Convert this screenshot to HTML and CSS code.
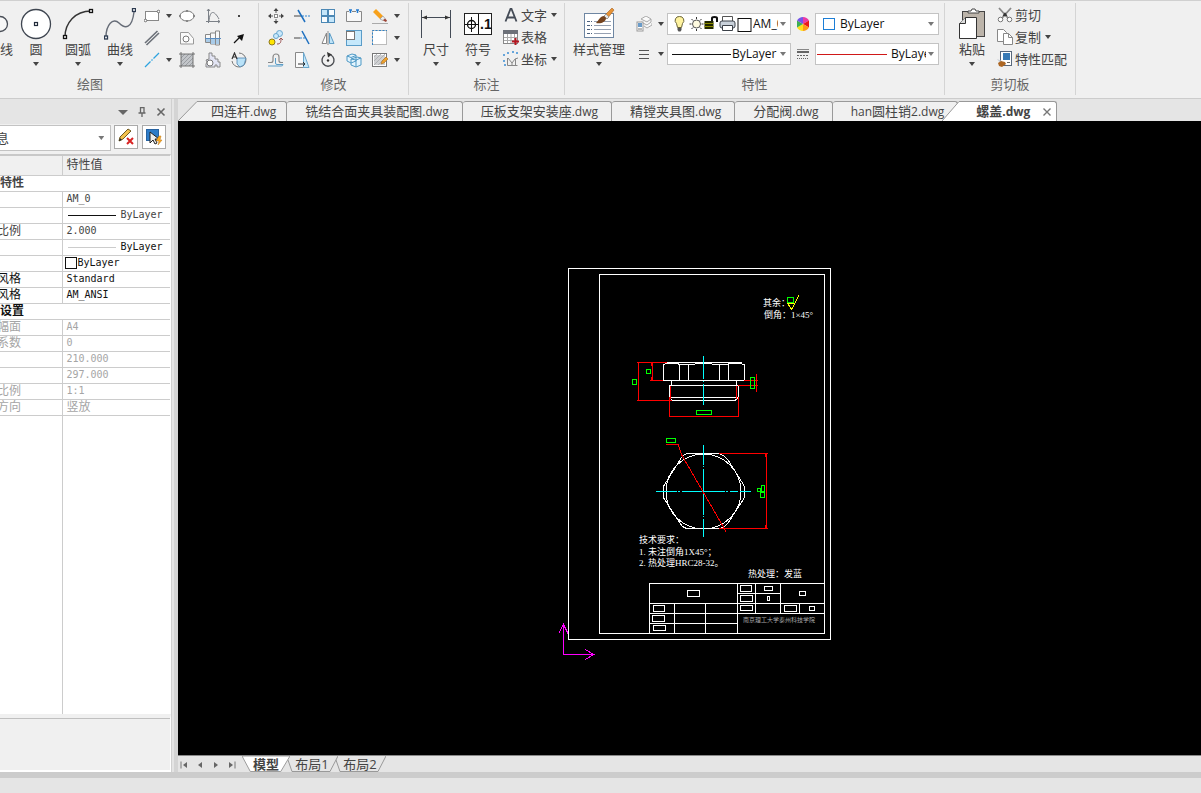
FILE: index.html
```html
<!DOCTYPE html>
<html lang="zh-CN">
<head>
<meta charset="utf-8">
<title>螺盖.dwg</title>
<link rel="stylesheet" href="styles.css">
</head>
<body>
<header class="ribbon">
  <section class="group group-draw">
    <div class="group-body">
      <button class="big big-cut"><svg width="15" height="32" viewBox="0 0 15 32"><circle cx="0" cy="16" r="7.500" fill="#f8f8f8" stroke="#4a4f58" stroke-width="1.300"/></svg><span>线</span></button>
      <button class="big"><svg width="32" height="32" viewBox="0 0 32 32"><circle cx="16" cy="16" r="14.500" fill="#fff" stroke="#3f4651" stroke-width="1.300"/><rect x="14.500" y="14.500" width="3" height="3" fill="#fff" stroke="#222b3a" stroke-width="1.200"/></svg><span>圆</span><i class="caret"></i></button>
      <button class="big"><svg width="32" height="32" viewBox="0 0 32 32"><path d="M3 29C3 15 13 3 29 3" fill="none" stroke="#333" stroke-width="1.400"/><g fill="#fff" stroke="#111" stroke-width="1.300"><rect x="1.500" y="27.500" width="3" height="3"/><rect x="27.500" y="1.500" width="3" height="3"/></g></svg><span>圆弧</span><i class="caret"></i></button>
      <button class="big"><svg width="32" height="32" viewBox="0 0 32 32"><path d="M2 29C2 17 9 9 15 15S28 21 30 4" fill="none" stroke="#666c77" stroke-width="1.400"/><g fill="#fff" stroke="#2c3a50" stroke-width="1.300"><rect x=".5" y="28" width="3" height="3"/><rect x="28.500" y=".5" width="3" height="3"/></g></svg><span>曲线</span><i class="caret"></i></button>
      <div class="tools tools-draw">
        <div class="split"><button aria-label="矩形"><svg class="ic" viewBox="0 0 16 16"><rect x="1.500" y="3.500" width="13" height="9" fill="#fff" stroke="#888"/><circle cx="1.500" cy="12.500" r="1.300" fill="#fff" stroke="#555" stroke-width=".8"/><circle cx="14.500" cy="3.500" r="1.300" fill="#fff" stroke="#555" stroke-width=".8"/></svg></button><button aria-label="矩形选项"><i class="caret"></i></button></div>
        <button aria-label="椭圆"><svg class="ic" viewBox="0 0 16 16"><ellipse cx="8" cy="8" rx="7" ry="5" fill="#fff" stroke="#777"/><path d="M7 2h2v2H7zM7 12h2v2H7zM0 7h2v2H0zM14 7h2v2h-2z" fill="#888"/></svg></button>
        <button aria-label="函数曲线"><svg class="ic" viewBox="0 0 16 16"><path d="M3.500 1v14M1 13.500h14M13 12l2 1.500-2 1.500M2 3l1.500-2L5 3M4 13C5 2 9 2 14 11" fill="none" stroke="#7b8087"/></svg></button>
        <button aria-label="点"><svg class="ic" viewBox="0 0 16 16"><rect x="7" y="7" width="2" height="2" fill="#444"/></svg></button>
        <div class="split"><button aria-label="平行线"><svg class="ic" viewBox="0 0 16 16"><path d="M1 13L13.500 1M2.500 15L15 3" stroke="#6b7078" stroke-width="1.600"/></svg></button></div>
        <button aria-label="轮廓"><svg class="ic" viewBox="0 0 16 16"><path d="M1.500 2.500h8l5 6v5.500h-13z" fill="#fafafa" stroke="#999"/><circle cx="7" cy="9" r="3" fill="#fff" stroke="#777"/></svg></button>
        <button aria-label="轴"><svg class="ic" viewBox="0 0 16 16"><path d="M.5 4.500h5v8h-5zM5.500 3h5v11h-5zM10.500 1h4v14h-4z" fill="#f8f8f8" stroke="#888"/><path d="M1 9h4v3H1zM6 9h4v5H6zM11 9h3v5h-3z" fill="#a9cbe8"/><path d="M0 8.500h16" stroke="#5a8cc0"/></svg></button>
        <button aria-label="箭头"><svg class="ic" viewBox="0 0 16 16"><path d="M3 13l6-6" stroke="#111" stroke-width="1.300"/><path d="M13 4l-7 2 5 5z" fill="#111"/></svg></button>
        <div class="split"><button aria-label="中心线"><svg class="ic" viewBox="0 0 16 16"><path d="M1 15l5.500-5.500M7.500 8.500l1-1M9.500 6.500L15 1" stroke="#2da4e0" stroke-width="1.300"/></svg></button><button aria-label="中心线选项"><i class="caret"></i></button></div>
        <button aria-label="剖面线"><svg class="ic" viewBox="0 0 16 16"><path d="M2 2h12v12H2z" fill="#c2c5c9"/><path d="M2 14L14 2M2 10l8-8M6 14l8-8M2 6l4-4M10 14l4-4" stroke="#9a9da2"/><path d="M2 0v16M14 0v16M0 2h16M0 14h16" stroke="#666" stroke-width=".9"/></svg></button>
        <button aria-label="齿轮"><svg class="ic" viewBox="0 0 16 16"><path d="M1 8l3-1V1h3v3h3v3h3v3h2v5h-3v-2h-2v2H1v-3l1-2z" fill="#e3e5f4" stroke="#888"/><circle cx="5" cy="11" r="3" fill="#fff" stroke="#777"/></svg></button>
        <button aria-label="局部放大"><svg class="ic" viewBox="0 0 16 16"><path d="M8 1a7 7 0 1 1-7 8" fill="none" stroke="#777"/><path d="M6 6h9l-2 7-4 2-3-3z" fill="#b9e2f8" stroke="#4e83ad" stroke-width=".8"/><path d="M1 7l2.500-6L6 7M2 5h3" fill="none" stroke="#333" stroke-width="1.200"/></svg></button>
      </div>
    </div>
    <h2>绘图</h2>
  </section>

  <section class="group group-edit">
    <div class="group-body">
      <div class="tools tools-edit">
        <button aria-label="平移"><svg class="ic" viewBox="0 0 16 16"><path d="M8 1v4M8 11v4M1 8h4M11 8h4" stroke="#555"/><path d="M8 0l2.500 3h-5zM8 16l2.500-3h-5zM0 8l3-2.500v5zM16 8l-3-2.500v5z" fill="#444"/><rect x="6.500" y="6.500" width="3" height="3" fill="#fff" stroke="#888"/></svg></button>
        <button aria-label="裁剪"><svg class="ic" viewBox="0 0 16 16"><path d="M0 8h8" stroke="#444"/><path d="M8 8h8" stroke="#2e84d0" stroke-dasharray="2 1"/><path d="M4 2l7 12" stroke="#1c6fc0" stroke-width="1.500"/></svg></button>
        <button aria-label="阵列"><svg class="ic" viewBox="0 0 16 16"><g fill="#c4e6fa" stroke="#4c88b5"><rect x="1.500" y="1.500" width="6" height="6"/><rect x="8.500" y="1.500" width="6" height="6" fill="#f8fcff"/><rect x="1.500" y="8.500" width="6" height="6" fill="#f8fcff"/><rect x="8.500" y="8.500" width="6" height="6"/></g></svg></button>
        <button aria-label="打断"><svg class="ic" viewBox="0 0 16 16"><path d="M3 3.500H.5v10h15v-10H13M6 3.500h4" fill="#f8f8f8" stroke="#888"/><path d="M3 2h3M4.500 2v3M10 2h3M11.500 2v3" fill="none" stroke="#247bd0" stroke-width="1.500"/></svg></button>
        <div class="split"><button aria-label="删除"><svg class="ic" viewBox="0 0 16 16"><path d="M1 4l3-3 7 7-3 3z" fill="#f7a11b"/><path d="M8 11l3-3 2 2.500-2 2z" fill="#eee" stroke="#888" stroke-width=".6"/><path d="M11 12.500l2-2 2 2-1 1.500z" fill="#9c4435"/><path d="M0 15.500h16" stroke="#aaa"/></svg></button><button aria-label="删除选项"><i class="caret"></i></button></div>
        <button aria-label="复制对象"><svg class="ic" viewBox="0 0 16 16"><circle cx="11.500" cy="3.500" r="3" fill="#cae8fb" stroke="#66a6ce"/><circle cx="8" cy="6" r="2.500" fill="#cae8fb" stroke="#66a6ce"/><circle cx="4" cy="12" r="3" fill="#ffe500" stroke="#8f7a22"/><path d="M9 14c3 0 4-1 4-5M11 10l2-2 2 2" fill="none" stroke="#9a5555"/></svg></button>
        <button aria-label="延伸"><svg class="ic" viewBox="0 0 16 16"><path d="M0 8h6" stroke="#444"/><path d="M6 8h5" stroke="#2e84d0" stroke-dasharray="2 1"/><path d="M8 1l7 13" stroke="#1c6fc0" stroke-width="1.500"/></svg></button>
        <button aria-label="镜像"><svg class="ic" viewBox="0 0 16 16"><path d="M6.500 3v10.500H2z" fill="#fff" stroke="#888"/><path d="M9.500 3v10.500H14z" fill="#bfe4f8" stroke="#5d9cc6"/><path d="M8 1v14" stroke="#777" stroke-width=".8"/></svg></button>
        <button aria-label="缩放"><svg class="ic" viewBox="0 0 16 16"><rect x=".5" y=".5" width="15" height="15" fill="#c5e8fb" stroke="#5a9cc8"/><rect x=".5" y="1.500" width="8" height="8" fill="#fff" stroke="#777"/></svg></button>
        <div class="split"><button aria-label="拉伸"><svg class="ic" viewBox="0 0 16 16"><rect x=".5" y=".5" width="14" height="14" fill="#fff" stroke="#bbb"/><path d="M.5 15V.5H15" fill="none" stroke="#3184c8" stroke-dasharray="2 1.500"/></svg></button><button aria-label="拉伸选项"><i class="caret"></i></button></div>
        <button aria-label="偏移"><svg class="ic" viewBox="0 0 16 16"><path d="M0 10.500h3q2 0 2-2V5a3 3 0 0 1 6 0v3.500q0 2 2 2h2" fill="none" stroke="#888" stroke-width="1.200"/><path d="M0 14h13q2 0 2-1.500H9q-1.500 0-1.500-1.500V6" fill="none" stroke="#5c9ec8"/></svg></button>
        <button aria-label="倒角"><svg class="ic" viewBox="0 0 16 16"><path d="M1.500.5h8v15h-8z" fill="#fafafa" stroke="#888"/><path d="M9.500.5l5.500 15H9.500z" fill="#c6e8fa" stroke="#69a6cc"/><path d="M4 12h7M9 10l2 2-2 2" fill="none" stroke="#333"/></svg></button>
        <button aria-label="旋转"><svg class="ic" viewBox="0 0 16 16"><path d="M5 3a6 6 0 1 0 6 0" fill="none" stroke="#4b4d52" stroke-width="1.400"/><path d="M7 0l5 2.500-4 3z" fill="#333"/><circle cx="8" cy="8.500" r="1.200" fill="#333"/></svg></button>
        <button aria-label="分解"><svg class="ic" viewBox="0 0 16 16"><path d="M1 4l5-2 4 1v6l-5 2-4-2zM5 7l6-2 4 1v7l-5 2-5-2z" fill="#e4f5fe" stroke="#4f99c5"/><path d="M5 7l5 1 5-2M10 8v7M1 4l4 1.500 5-2" fill="none" stroke="#4f99c5"/></svg></button>
        <div class="split"><button aria-label="编辑剖面"><svg class="ic" viewBox="0 0 16 16"><rect x=".5" y="1.500" width="14" height="13" fill="#fff" stroke="#777"/><path d="M2 3h11v10H2z" fill="#cfd0d2"/><path d="M2 13L13 2M2 9l7-7M2 5l3-3M6 13l8-8" stroke="#b0b2b5"/><path d="M9 12l1-3 4-4 2 2-4 4z" fill="#eda22e" stroke="#a66b22" stroke-width=".6"/></svg></button><button aria-label="编辑剖面选项"><i class="caret"></i></button></div>
      </div>
    </div>
    <h2>修改</h2>
  </section>

  <section class="group group-note">
    <div class="group-body">
      <button class="big"><svg width="32" height="32" viewBox="0 0 32 32"><path d="M1.500 2v28M30.500 2v28M2 9.500h28" stroke="#444b56"/><path d="M2 9.500l5-2v4zM30 9.500l-5-2v4z" fill="#333"/></svg><span>尺寸</span><i class="caret"></i></button>
      <button class="big"><svg width="32" height="32" viewBox="0 0 32 32"><rect x="2.500" y="5.500" width="27" height="21" fill="#fff" stroke="#222"/><path d="M16.500 6v20M3 16.500h13M9.500 9v15" stroke="#111"/><circle cx="9.500" cy="16.500" r="4" fill="none" stroke="#111" stroke-width="1.300"/><text x="18" y="21" class="sym">.1</text></svg><span>符号</span><i class="caret"></i></button>
      <div class="list">
        <button><svg class="ic" viewBox="0 0 16 16"><path d="M2.500 14.500L7.500 2h1l5 12.500M4.500 10.500h7" fill="none" stroke="#444b56" stroke-width="1.800"/></svg><span>文字</span><i class="caret"></i></button>
        <button><svg class="ic" viewBox="0 0 16 16"><rect x=".5" y="1.500" width="14" height="13" fill="#fff" stroke="#888"/><path d="M0 1h15v4H0z" fill="#6c7078"/><path d="M1 8.500h13M1 11.500h13M4.500 5v9M8 5v9M11.500 5v9" stroke="#aaa"/><path d="M12.500 9v7M9 12.500h7" stroke="#b51620" stroke-width="2"/></svg><span>表格</span></button>
        <button><svg class="ic" viewBox="0 0 16 16"><path d="M4.500 7v7.500h10M5 7l4 5 3-4 3-1M9 12v2M12.500 8v6" fill="none" stroke="#888"/><path d="M1 3v2M5 1v2M9 1h2M14 1v2M1 9v2M2 13v2" stroke="#3b8dd3" stroke-width="1.500"/></svg><span>坐标</span><i class="caret"></i></button>
      </div>
    </div>
    <h2>标注</h2>
  </section>

  <section class="group group-props">
    <div class="group-body">
      <button class="big big-wide"><svg width="32" height="32" viewBox="0 0 32 32"><rect x="1.500" y="5.500" width="29" height="24" fill="#fff" stroke="#6e86a2"/><path d="M4 13.500h5M4 17.500h5M4 21.500h5M4 25.500h5" stroke="#4b607c" stroke-dasharray="3 1"/><path d="M11 13.500h17M11 17.500h17M11 21.500h17M11 25.500h17" stroke="#97a1b2"/><path d="M29 0l2 2-7 9-3-3z" fill="#e69235" stroke="#a56224" stroke-width=".6"/><path d="M23 6l3 3-2 2-3-3z" fill="#e4e4e4" stroke="#777" stroke-width=".5"/><path d="M21 8c-4 0-5 4-8 7 5 1 10-1 10-5z" fill="#75431e"/></svg><span>样式管理</span><i class="caret"></i></button>
      <div class="props">
        <div class="split prop-icon"><button aria-label="图层"><svg class="ic" viewBox="0 0 16 16"><path d="M5 3l5-3 5 3-4 3zM5 6l6 3 4-3v-3M8 10l3 2 5-3V7" fill="#fafafa" stroke="#aaa"/><rect x="1" y="6" width="6" height="9" fill="#fff" stroke="#999"/><rect x="2" y="7" width="4" height="4" fill="#6a9bc8"/><path d="M2 13h4" stroke="#777"/></svg></button><button aria-label="图层选项"><i class="caret"></i></button></div>
        <div class="combo">
          <svg class="states" width="78" height="18" viewBox="0 0 78 18"><path d="M9 1.500a4 4 0 0 1 3 7l-1 4H7l-1-4a4 4 0 0 1 3-7z" fill="#fff3a0" stroke="#6b6538"/><path d="M7 13h4v2l-1 1.500H8L7 15z" fill="#555"/><circle cx="26" cy="9" r="4" fill="#fffbe0" stroke="#555"/><path d="M26 2v2M26 14v2M19 9h2M31 9h2M21 4l1.500 1.500M29.500 12.500L31 14M21 14l1.500-1.500M29.500 5.500L31 4" stroke="#333"/><path d="M34 6h9v8h-9z" fill="#222800"/><path d="M34 8.500h9M34 11.500h9" stroke="#8c8c00"/><path d="M41.500 6V3q0-1 2.500-1t2.500 1v4" fill="none" stroke="#111" stroke-width="2"/><path d="M52 6V1.500h10V6" fill="#fff" stroke="#555"/><rect x="49.500" y="6" width="15" height="7" rx="2" fill="#c9d1da" stroke="#3b4048"/><path d="M52 10.500h10v5H52z" fill="#fff" stroke="#3b4048"/><rect x="67.500" y="3.500" width="13" height="13" fill="#fff" stroke="#111"/></svg>
          <select aria-label="图层"><option>AM_0</option></select><i class="caret"></i></div>
        <svg class="mid" width="14" height="14" viewBox="0 0 14 14"><path d="M7 7V0a7 7 0 0 1 6 3.500z" fill="#ea3ba4"/><path d="M7 7l6-3.500v7z" fill="#e91919"/><path d="M7 7l6 3.500A7 7 0 0 1 7 14z" fill="#ff9a16"/><path d="M7 7v7a7 7 0 0 1-6-3.500z" fill="#ffdf17"/><path d="M7 7l-6 3.500v-7z" fill="#3dae54"/><path d="M7 7L1 3.500A7 7 0 0 1 7 0z" fill="#7455e8"/></svg>
        <div class="combo"><span class="swatch"></span><select aria-label="颜色"><option>ByLayer</option></select><i class="caret"></i></div>
        <div class="split prop-icon"><button aria-label="线型"><svg class="ic" viewBox="0 0 16 16"><path d="M3 4.500h10M3 8.500h10M3 12.500h10" stroke="#555"/></svg></button><button aria-label="线型选项"><i class="caret"></i></button></div>
        <div class="combo"><span class="line"></span><select aria-label="线型"><option>ByLayer</option></select><i class="caret"></i></div>
        <svg class="mid" width="14" height="14" viewBox="0 0 14 14"><path d="M1 2.500h12" stroke="#888"/><path d="M1 5h12" stroke="#666" stroke-width="2"/><path d="M1 8.500h12" stroke="#666" stroke-dasharray="2 1"/><path d="M1 11.500h12" stroke="#666" stroke-dasharray="1 1"/></svg>
        <div class="combo"><span class="line line-red"></span><select aria-label="线宽"><option>ByLayer</option></select><i class="caret"></i></div>
      </div>
    </div>
    <h2>特性</h2>
  </section>

  <section class="group group-clip">
    <div class="group-body">
      <button class="big"><svg width="32" height="32" viewBox="0 0 32 32"><rect x="6.500" y="3.500" width="22" height="25" fill="#bcb4aa" stroke="#444"/><path d="M12 5V3h3l1-2h3l1 2h3v2z" fill="#fff" stroke="#444"/><path d="M3.500 15.500l6-6h11v21h-17z" fill="#fff" stroke="#333"/><path d="M3.500 15.500h6v-6" fill="#ddd" stroke="#333"/></svg><span>粘贴</span><i class="caret"></i></button>
      <div class="list">
        <button><svg class="ic" viewBox="0 0 16 16"><path d="M2 1l9 10M14 1L5 11" stroke="#888" stroke-width="1.800"/><path d="M6.500 9L8 7l1.500 2" fill="none" stroke="#333" stroke-width="2"/><circle cx="3.500" cy="12.500" r="2.300" fill="#fff" stroke="#777"/><circle cx="12.500" cy="12.500" r="2.300" fill="#fff" stroke="#777"/></svg><span>剪切</span></button>
        <button><svg class="ic" viewBox="0 0 16 16"><path d="M.5.500h6l3 3v9h-9z" fill="#fff" stroke="#888"/><path d="M6.500 4.500h5l4 4v7h-9z" fill="#fff" stroke="#888"/><path d="M11.500 4.500v4h4" fill="none" stroke="#888"/></svg><span>复制</span><i class="caret"></i></button>
        <button><svg class="ic" viewBox="0 0 16 16"><rect x="3.500" y=".5" width="11" height="14" fill="#fff" stroke="#58687c"/><rect x="6" y="2" width="7" height="7" fill="#397ab5"/><path d="M10 11.500h3" stroke="#666"/><path d="M0 8l5 2-1 3z" fill="#c5cbd2"/><path d="M1 12l3-2 4 1 1 2-4 3-3-1z" fill="#ad6724"/></svg><span>特性匹配</span></button>
      </div>
    </div>
    <h2>剪切板</h2>
  </section>
</header>

<main class="work">
  <aside class="panel">
    <div class="panel-head">
      <button aria-label="菜单"><svg width="10" height="10" viewBox="0 0 10 10"><path d="M0 3h10L5 8z" fill="#666"/></svg></button>
      <button aria-label="固定"><svg width="10" height="10" viewBox="0 0 10 10"><path d="M3 .5h4M3.500 0v6M7 0v6M1.500 6h7M5 6v4" fill="none" stroke="#666" stroke-width="1.300"/></svg></button>
      <button aria-label="关闭面板"><svg width="10" height="10" viewBox="0 0 10 10"><path d="M1.500 1.500l7 7M8.500 1.500l-7 7" stroke="#666" stroke-width="1.600"/></svg></button>
    </div>
    <div class="panel-tools">
      <div class="combo combo-info"><select aria-label="信息"><option>息</option></select><i class="caret"></i></div>
      <button class="tool" aria-label="清除"><svg width="18" height="18" viewBox="0 0 18 18"><path d="M2 13l1-4 8-8 3 2-8 8z" fill="#f3c14c" stroke="#705a21"/><path d="M2 13l1-3 2 2z" fill="#222"/><path d="M10 10l6 6M16 10l-6 6" stroke="#d82323" stroke-width="2"/></svg></button>
      <button class="tool" aria-label="选择"><svg width="18" height="18" viewBox="0 0 18 18"><rect x="1.500" y="1.500" width="12" height="11" fill="#2d7cc9" stroke="#2662a0"/><path d="M5 4v11l3-3 2 4 2-1-2-4h4z" fill="#eee" stroke="#222"/><path d="M14 8l-3 5h3l-1 4 4-5h-2l1-4z" fill="#ffab20" stroke="#b8761a" stroke-width=".5"/></svg></button>
    </div>
    <div class="grid-wrap">
    <table class="grid">
      <thead><tr><th></th><th>特性值</th></tr></thead>
      <tbody>
        <tr class="soft sect"><th colspan="2">特性</th></tr>
        <tr class="soft"><td></td><td>AM_0</td></tr>
        <tr class="soft"><td></td><td><span class="sample"></span>ByLayer</td></tr>
        <tr class="soft"><td class="cut">比例</td><td>2.000</td></tr>
        <tr><td></td><td><span class="sample sample-thin"></span>ByLayer</td></tr>
        <tr><td></td><td><span class="box"></span>ByLayer</td></tr>
        <tr><td class="cut">风格</td><td>Standard</td></tr>
        <tr><td class="cut">风格</td><td>AM_ANSI</td></tr>
        <tr class="sect"><th colspan="2">设置</th></tr>
        <tr class="off"><td class="cut">幅面</td><td>A4</td></tr>
        <tr class="off"><td class="cut">系数</td><td>0</td></tr>
        <tr class="off"><td></td><td>210.000</td></tr>
        <tr class="off"><td></td><td>297.000</td></tr>
        <tr class="off"><td class="cut">比例</td><td>1:1</td></tr>
        <tr class="off"><td class="cut">方向</td><td class="han">竖放</td></tr>
        <tr class="fill"><td></td><td></td></tr>
      </tbody>
    </table>
    </div>
    <div class="hint"></div>
  </aside>
  <div class="splitter"></div>

  <div class="docs">
    <nav class="tabs">
      <svg class="slope" width="20" height="20" viewBox="0 0 20 20"><path d="M0 20L19 .5H20V20z" fill="#f0f0f0"/><path d="M0 20L19 .5H20" fill="none" stroke="#999"/></svg>
      <button class="tab tab-first">四连杆<span>.dwg</span></button>
      <button class="tab">铣结合面夹具装配图<span>.dwg</span></button>
      <button class="tab">压板支架安装座<span>.dwg</span></button>
      <button class="tab">精镗夹具图<span>.dwg</span></button>
      <button class="tab">分配阀<span>.dwg</span></button>
      <button class="tab"><span>han</span>圆柱销<span>2.dwg</span></button>
      <svg class="slope slope-active" width="18" height="20" viewBox="0 0 18 20"><path d="M0 20L17 .5H18V20z" fill="#fff"/><path d="M0 20L17 .5H18" fill="none" stroke="#999"/></svg>
      <div class="tab tab-active"><button>螺盖<span>.dwg</span></button><button aria-label="关闭"><svg width="8" height="8" viewBox="0 0 8 8"><path d="M.5.500l7 7M7.500.500l-7 7" stroke="#777" stroke-width="1.400"/></svg></button></div>
    </nav>
    <div class="canvas">
      <svg class="drawing" viewBox="178 121 1023 634" preserveAspectRatio="xMidYMid meet" role="img" aria-label="螺盖零件图">
        <g class="w">
          <path d="M568.500 268.500h262v371h-262zM599.500 274.500h225v359h-225z"/>
          <path d="M667 362.500h75M663.500 380.500V365q2-2 8-2t8 1.500h12q12-2 25 0h11q2-1.500 8-1.500t9 2v15.500zM679.500 364v16M688.500 364v16M719.500 364v16M728.500 364v16"/>
          <path d="M671.500 380v5M736.500 380v5M669.500 397.500v-12h69v12zM669.500 397.500l2.500 3h63l3-3"/>
          <circle cx="703.500" cy="491.500" r="37.500"/>
          <path d="M687 453.500h32q6 2 10 8l15 24q1 6 0 13l-15 23q-4 6-10 7h-32q-5-1-8-7l-15-23q-1-7 0-13l15-24q3-6 8-8z"/>
          <path d="M649.500 633.500v-50h175M649.500 603.500h175M649.500 613.500h175M649.500 623.500h88M674.500 603.500v30M705.500 603.500v30M737.500 583.500v50M755.500 583.500v30M780.500 583.500v30M799.500 603.500v10M737.500 593.500h43"/>
          <path d="M687.500 590.500h12v6h-12zM740.500 585.500h11v6h-11zM764.500 586.500h8v4h-8zM740.500 595.500h12v6h-12zM767.500 596.500h2v4h-2zM799.500 591.500h6v4h-6zM653.500 605.500h11v6h-11zM740.500 605.500h12v5h-12zM784.500 605.500h12v6h-12zM809.500 606.500h5v4h-5zM652.500 615.500h12v6h-12zM653.500 625.500h12v5h-12z"/>
        </g>
        <g class="c">
          <path d="M703.500 356v23M703.500 381v1M703.500 384v21M703.500 445v20M703.500 466v1M703.500 469v46M703.500 516v1M703.500 519v18M656 491.500h21M678 491.500h2M682 491.500h43M726 491.500h2M730 491.500h8M740 491.500h11"/>
        </g>
        <g class="r">
          <path d="M667 362.500h-30M638.500 362v38M637 400.500h35M652.500 362v18M651.500 363v3M651.500 377v3M650 380.500h13M670.500 386v13M736.500 386v13M669.500 397v20M738.500 397v20M669 416.500h69M756.500 374v18M744 380.500h14M738 385.500h20"/>
          <path d="M666 444.500h12l4 11 44 76M719 453.500h49M719 528.500h49M766.500 453v75M765.500 454v3M765.500 525v3"/>
        </g>
        <g class="g">
          <path d="M632.500 379.500h4v5h-4zM646.500 369.500h4v4h-4zM750.500 377.500h4v11h-4zM696.500 410.500h15v4h-15zM666.500 438.500h9v4h-9zM757.500 488.500h3v3h-3zM761.500 485.500h3v6h-3zM760.500 492.500h4v5h-4zM787.500 297.500h6v5h-6z"/>
        </g>
        <path class="y" d="M787 303.500h7M788 304l3.500 5.500 7.500-14"/>
        <path class="m" d="M563.500 624v30.500H594M559 632.500l4.500-8 4.500 9M585 649.500l9 5-9 5"/>
        <g class="notes">
          <text x="763" y="306">其余：</text>
          <text x="764" y="318">倒角：1×45°</text>
          <text x="639" y="543">技术要求：</text>
          <text x="639" y="555">1. 未注倒角1X45°；</text>
          <text x="639" y="566">2. 热处理HRC28-32。</text>
          <text x="748" y="577">热处理：发蓝</text>
          <text x="743" y="622" class="school">南京理工大学泰州科技学院</text>
        </g>
      </svg>
    </div>
    <nav class="sheets">
      <div class="nav">
        <button aria-label="首页"><svg width="8" height="8" viewBox="0 0 8 8"><path d="M1 .5v7" stroke="#777"/><path d="M7 1v6L3 4z" fill="#666"/></svg></button>
        <button aria-label="上一页"><svg width="8" height="8" viewBox="0 0 8 8"><path d="M6 1v6L2 4z" fill="#666"/></svg></button>
        <button aria-label="下一页"><svg width="8" height="8" viewBox="0 0 8 8"><path d="M2 1v6l4-3z" fill="#666"/></svg></button>
        <button aria-label="末页"><svg width="8" height="8" viewBox="0 0 8 8"><path d="M7 .5v7" stroke="#777"/><path d="M1 1v6l4-3z" fill="#666"/></svg></button>
      </div>
      <button class="sheet sheet-on"><svg viewBox="0 0 52 16" preserveAspectRatio="none"><path d="M0 0l9 15.500h33L52 0z" fill="#fff" stroke="#999"/></svg><span>模型</span></button>
      <button class="sheet"><svg viewBox="0 0 52 16" preserveAspectRatio="none"><path d="M2 4l4 11.500h38L52 0" fill="none" stroke="#999"/></svg><span>布局1</span></button>
      <button class="sheet"><svg viewBox="0 0 52 16" preserveAspectRatio="none"><path d="M2 4l4 11.500h38L52 0" fill="none" stroke="#999"/></svg><span>布局2</span></button>
    </nav>
  </div>
</main>
<footer class="status"></footer>
</body>
</html>
```

FILE: styles.css
```css
* { box-sizing: border-box; }
html, body { height: 100%; }
body {
  margin: 0;
  display: flex;
  flex-direction: column;
  overflow: hidden;
  background: #e5e5e5;
  color: #444;
  font: 12px/16px "Open Sans", "Noto Sans CJK SC", sans-serif;
}
button {
  margin: 0;
  padding: 0;
  border: 0;
  background: none;
  color: inherit;
  font: inherit;
  white-space: nowrap;
}
svg { display: block; flex: none; }
.caret {
  display: block;
  flex: none;
  width: 6px;
  height: 4px;
  background: #444;
  clip-path: polygon(0 0, 100% 0, 50% 100%);
}
.ic { width: 16px; height: 16px; }

/* ribbon */
.ribbon {
  flex: none;
  display: flex;
  background: #f0f0f0;
  border-top: 1px solid #d0d0d0;
  border-bottom: 1px solid #ccc;
  font-size: 13px;
}
.group {
  flex: none;
  display: flex;
  flex-direction: column;
  margin: 2px 0 3px;
  border-right: 1px solid #d4d4d4;
}
.group-body { display: flex; height: 73px; }
.group h2 {
  margin: 0;
  height: 19px;
  font-size: 13px;
  font-weight: 400;
  line-height: 16px;
  text-align: center;
  color: #666;
}
.group-draw { width: 259px; }
.group-draw h2 { padding-right: 78px; }
.group-edit { width: 150px; }
.group-edit .group-body { padding-left: 9px; }
.group-note { width: 156px; }
.group-note .group-body, .group-clip .group-body { padding-left: 6px; }
.group-props { width: 380px; }
.group-props .group-body { padding-left: 6px; }
.group-clip { width: 131px; }
.big {
  flex: none;
  width: 42px;
  padding-top: 5px;
  display: flex;
  flex-direction: column;
  align-items: center;
}
.big span { margin: 1px 0 5px; line-height: 16px; }
.big-cut { width: 15px; align-items: flex-start; }
.big-wide { width: 56px; }
.sym { font: bold 14px "Liberation Sans", sans-serif; fill: #111; }
.tools { display: grid; grid-auto-rows: 22px; align-items: center; padding-top: 2px; }
.tools-draw { grid-template-columns: 35px 26px 26px 16px; margin-left: 3px; }
.tools-edit { grid-template-columns: 26px 26px 26px 26px 32px; }
.split { display: flex; align-items: center; gap: 6px; }
.list { margin-left: 4px; padding-top: 1px; }
.list button { display: flex; align-items: center; height: 22px; gap: 2px; }
.list .caret { margin-left: 2px; }

.props {
  display: grid;
  grid-template-columns: 31px 124px 24px 124px;
  grid-auto-rows: 22px;
  row-gap: 8px;
  align-items: center;
  margin: 10px 0 0 9px;
}
.mid { justify-self: center; }
.combo {
  display: flex;
  align-items: center;
  height: 22px;
  padding: 0 4px 0 1px;
  background: #fff;
  border: 1px solid #c3c3c3;
  overflow: hidden;
}
.combo select {
  flex: 1;
  min-width: 0;
  padding: 0;
  border: 0;
  appearance: none;
  background: none;
  color: #111;
  font: 12px/18px "Open Sans", "Noto Sans CJK SC", sans-serif;
}
.combo .caret { margin-left: 2px; background: #777; }
.states { width: 81px; margin-right: 3px; overflow: visible; }
.swatch { width: 12px; height: 12px; margin: 0 5px 0 6px; border: 1px solid #1c7ed6; }
.line { flex: none; width: 59px; height: 1px; margin: 0 1px 0 3px; background: #111; }
.line-red { width: 70px; margin: 0 4px 0 0; background: #d01818; }

/* work area */
.work { flex: 1; min-height: 0; display: flex; }
.panel {
  flex: none;
  width: 172px;
  display: flex;
  flex-direction: column;
  background: #f0f0f0;
  border-right: 1px solid #d0d0d0;
}
.panel-head {
  display: flex;
  justify-content: flex-end;
  align-items: center;
  gap: 9px;
  height: 25px;
  padding-right: 5px;
  background: #e5e5e5;
}
.panel-tools { display: flex; gap: 3px; padding: 1px 5px 3px 0; }
.combo-info { width: 112px; height: 26px; padding: 0 6px 0 0; border-left: 0; }
.combo-info select { font-size: 13px; color: #444; text-indent: -4px; }
.tool {
  width: 24px;
  height: 24px;
  display: grid;
  place-items: center;
  background: #fff;
  border: 1px solid #aaa;
}
.tool + .tool { margin-left: 1px; }
.grid-wrap {
  flex: 1;
  min-height: 0;
  display: flex;
  border-top: 2px solid #c8c8c8;
  border-right: 1px solid #fff;
  background: #fff;
}
.grid {
  width: 100%;
  height: 100%;
  border-collapse: collapse;
  table-layout: fixed;
  font: 10px/14px "DejaVu Sans Mono", "Noto Sans CJK SC", monospace;
  color: #111;
}
.grid th, .grid td {
  height: 16px;
  padding: 0 0 0 4px;
  border-bottom: 1px solid #ccc;
  text-align: left;
  white-space: nowrap;
  overflow: hidden;
}
.grid td:first-child, .grid thead th:first-child {
  width: 62px;
  padding: 0;
  border-right: 1px solid #ccc;
}
.grid thead th {
  height: 19px;
  background: #f0f0f0;
  font-size: 12px;
  font-weight: 400;
  color: #444;
}
.grid .soft { color: #444; }
.grid .sect th { padding: 0; font-size: 12px; font-weight: 700; }
.grid .cut { font-size: 12px; text-indent: -3px; }
.grid .han { font-size: 12px; }
.grid .off { color: #a5a5a5; }
.grid .fill td { height: auto; border-bottom: 0; }
.sample {
  display: inline-block;
  width: 48px;
  height: 1px;
  margin: 0 5px 0 1px;
  vertical-align: middle;
  background: #111;
}
.sample-thin { background: #ccc; }
.box {
  display: inline-block;
  width: 12px;
  height: 12px;
  margin: 0 1px 0 -2px;
  vertical-align: middle;
  border: 1px solid #111;
}
.hint {
  flex: none;
  height: 58px;
  border-top: 4px solid #f0f0f0;
  border-right: 1px solid #fff;
  border-bottom: 2px solid #fff;
  box-shadow: inset 0 1px #c0c0c0;
}
.splitter {
  flex: none;
  width: 6px;
  background: #d4d4d4;
  border-left: 2px solid #e5e5e5;
}
.docs { flex: 1; min-width: 0; display: flex; flex-direction: column; }
.tabs { flex: none; display: flex; height: 22px; padding-top: 2px; background: #e5e5e5; }
.tab {
  flex: none;
  height: 20px;
  padding: 0 13px 0 18px;
  background: #f0f0f0;
  border: solid #999;
  border-width: 1px 1px 0 0;
  border-radius: 3px 3px 0 0;
  font-size: 13px;
  line-height: 18px;
}
.tab span { font-size: 12px; }
.tab-first { padding-left: 13px; padding-right: 10px; border-radius: 0 3px 0 0; }
.slope-active { margin-left: -16px; z-index: 1; }
.tab-active {
  display: flex;
  align-items: center;
  gap: 13px;
  padding: 0 5px 0 16px;
  background: #fff;
  border-radius: 0 3px 0 0;
  font-weight: 700;
}
.canvas { flex: 1; min-height: 0; background: #000; }
.drawing { width: 100%; height: 100%; shape-rendering: crispEdges; fill: none; }
.w { stroke: #fff; }
.c { stroke: #0ff; }
.r { stroke: #f00; }
.g { stroke: #0f0; }
.y { stroke: #ff0; }
.m { stroke: #f0f; }
.notes { fill: #fff; font: 9px "Liberation Serif", "Noto Sans CJK SC", serif; }
.notes .school { font-size: 6px; fill: #aaa; }

.sheets {
  flex: none;
  display: flex;
  height: 17px;
  border-top: 1px solid #888;
  background: #e5e5e5;
  font-size: 13px;
}
.nav { display: flex; align-items: center; gap: 8px; padding: 1px 6px 0 2px; }
.sheet { position: relative; width: 52px; margin-left: -4px; line-height: 12px; }
.sheet svg { position: absolute; inset: 0; width: 100%; height: 16px; }
.sheet span { position: relative; }
.sheet-on { z-index: 1; width: 48px; margin-left: 0; font-weight: 700; }
.status { flex: none; height: 21px; border-top: 6px solid #ccc; background: #e5e5e5; }
```
